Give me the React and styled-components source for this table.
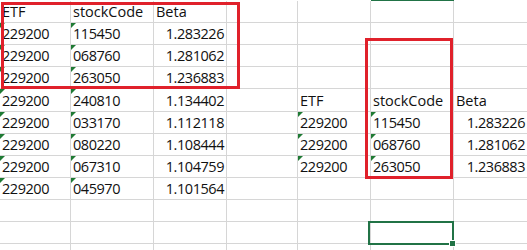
import React from 'react'
import styled, { createGlobalStyle } from 'styled-components'

const GlobalStyle = createGlobalStyle`
  html, body {
    margin: 0;
    padding: 0;
    background: #ffffff;
    overflow: hidden;
  }
  body {
    font-family: "Open Sans", "Noto Sans", sans-serif;
  }
`;

const COLS = ['A', 'B', 'C', 'D', 'E', 'F', 'G'];

// cell contents by row, t = number stored as text (green marker), n = number
const ROWS = [
  { A: 'ETF', B: 'stockCode', C: 'Beta' },
  { A: '229200t', B: '115450t', C: '1.283226n' },
  { A: '229200t', B: '068760t', C: '1.281062n' },
  { A: '229200t', B: '263050t', C: '1.236883n' },
  { A: '229200t', B: '240810t', C: '1.134402n', E: 'ETF', F: 'stockCode', G: 'Beta' },
  { A: '229200t', B: '033170t', C: '1.112118n', E: '229200t', F: '115450t', G: '1.283226n' },
  { A: '229200t', B: '080220t', C: '1.108444n', E: '229200t', F: '068760t', G: '1.281062n' },
  { A: '229200t', B: '067310t', C: '1.104759n', E: '229200t', F: '263050t', G: '1.236883n' },
  { A: '229200t', B: '045970t', C: '1.101564n' },
  {},
  {},
  {},
];

function App() {
  return (
    <>
      <GlobalStyle />
      <Sheet>
        {COLS.map((c) => (
          <HeaderEdge key={'h' + c} $active={c === 'F'} />
        ))}
        {ROWS.map((row, r) =>
          COLS.map((c) => {
            const raw = row[c] || '';
            const kind = raw.slice(-1);
            const isText = kind === 't';
            const isNum = kind === 'n';
            const value = isText || isNum ? raw.slice(0, -1) : raw;
            return (
              <Cell key={r + c} $right={isNum} $digits={isText || isNum}>
                {isText && <Marker />}
                {value}
              </Cell>
            );
          })
        )}
        <Callout style={{ left: 1, top: 2, width: 239, height: 87 }} />
        <Callout style={{ left: 365, top: 38, width: 88, height: 141 }} />
        <Selection>
          <Handle />
        </Selection>
      </Sheet>
    </>
  )
}

export default App

const Sheet = styled.div`
  position: relative;
  width: 527px;
  height: 250px;
  overflow: hidden;
  display: grid;
  grid-template-columns: 71px 83px 73px 71px 73px 83px 74px;
  grid-template-rows: 1px 22px 22px 22px 22px 23px 22px 22px 22px 22px 22px 22px 22px;
`;

const HeaderEdge = styled.div`
  background: ${(p) => (p.$active ? '#217346' : 'transparent')};
`;

const Cell = styled.div`
  position: relative;
  box-sizing: border-box;
  border-right: 1px solid #d6d6d6;
  border-bottom: 1px solid #d6d6d6;
  display: flex;
  align-items: flex-end;
  justify-content: ${(p) => (p.$right ? 'flex-end' : 'flex-start')};
  padding: 0 2px 1px 2px;
  font-size: 14.5px;
  line-height: 18px;
  letter-spacing: ${(p) => (p.$digits ? '-0.45px' : '0')};
  color: #111;
  white-space: nowrap;
`;

const Marker = styled.span`
  position: absolute;
  left: 0;
  top: 0;
  width: 0;
  height: 0;
  border-top: 5px solid #1f7a34;
  border-right: 5px solid transparent;
`;

const Callout = styled.div`
  position: absolute;
  box-sizing: border-box;
  border: 3px solid #e0212b;
  pointer-events: none;
`;

const Selection = styled.div`
  position: absolute;
  left: 368px;
  top: 221px;
  width: 86px;
  height: 24px;
  box-sizing: border-box;
  border: 2px solid #217346;
`;

const Handle = styled.span`
  position: absolute;
  right: -4px;
  bottom: -4px;
  width: 5px;
  height: 5px;
  background: #217346;
  border: 1px solid #ffffff;
`;
